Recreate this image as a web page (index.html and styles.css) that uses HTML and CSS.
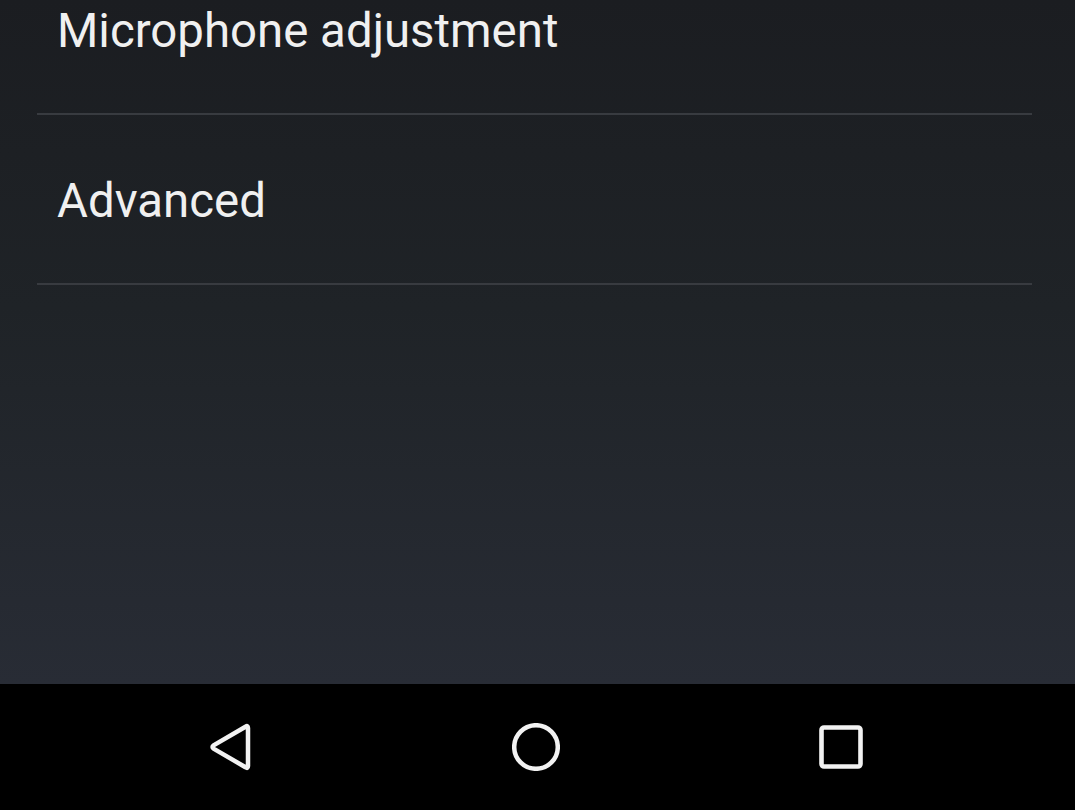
FILE: index.html
```html
<!DOCTYPE html>
<html>
<head>
<meta charset="utf-8">
<link rel="stylesheet" href="styles.css">
</head>
<body>
<main class="screen">
  <ul class="settings">
    <li class="row">Microphone adjustment</li>
    <li class="row">Advanced</li>
  </ul>
</main>
<nav class="navbar">
  <svg class="nav-icon" viewBox="0 0 48 48" width="48" height="48">
    <path d="M41 5 L41 43 Q41 46 38.5 44.2 L6.5 25.6 Q4.5 24 6.5 22.4 L38.5 3.8 Q41 2 41 5 Z" fill="none" stroke="#f2f2f2" stroke-width="4.5" stroke-linejoin="round"/>
  </svg>
  <svg class="nav-icon" viewBox="0 0 48 48" width="48" height="48">
    <circle cx="24" cy="24" r="21.8" fill="none" stroke="#f2f2f2" stroke-width="4.5"/>
  </svg>
  <svg class="nav-icon" viewBox="0 0 48 48" width="48" height="48">
    <rect x="4.5" y="4.5" width="39" height="39" rx="2.5" fill="none" stroke="#f2f2f2" stroke-width="4.6"/>
  </svg>
</nav>
</body>
</html>
```
FILE: styles.css
```css
html, body {
  margin: 0;
  padding: 0;
}
body {
  width: 1075px;
  height: 810px;
  display: flex;
  flex-direction: column;
  overflow: hidden;
  font-family: Roboto, "Noto Sans", sans-serif;
}
.screen {
  flex: 1;
  background: linear-gradient(180deg, #1b1d21 0%, #1f2327 45%, #282c35 100%);
  overflow: hidden;
}
.settings {
  list-style: none;
  margin: -55px 43px 0 37px;
  padding: 0;
}
.row {
  font-size: 47.4px;
  line-height: 55px;
  color: #f0f0f0;
  padding: 59px 0 54px 20px;
  border-bottom: 2px solid #383b40;
}
.navbar {
  height: 126px;
  background: #000;
  display: flex;
  align-items: center;
  justify-content: center;
  gap: 257px;
  padding-right: 4px;
}
.nav-icon {
  display: block;
}
```
